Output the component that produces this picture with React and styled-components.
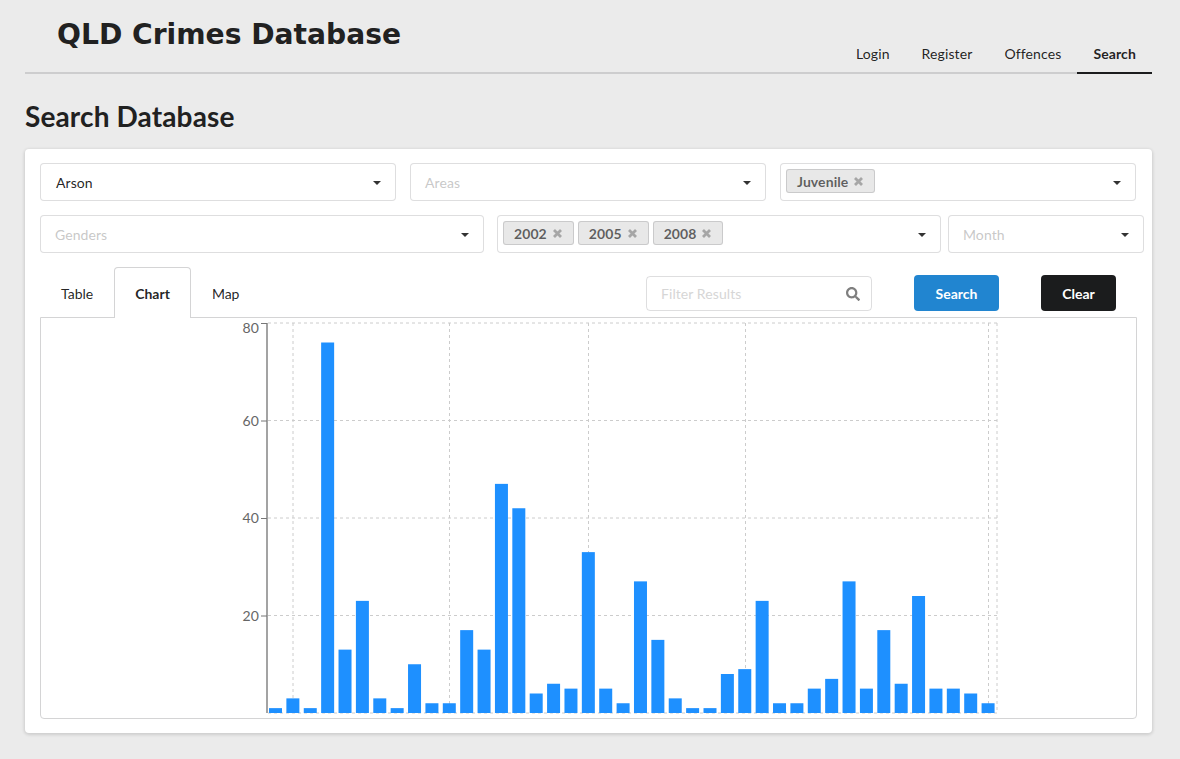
import React from 'react';
import styled, { createGlobalStyle } from 'styled-components';
import { FaSearch } from 'react-icons/fa';

const Global = createGlobalStyle`
  html, body {
    margin: 0;
    padding: 0;
    background: #ebebeb;
    font-family: Lato, "Helvetica Neue", Arial, sans-serif;
    font-size: 14px;
    letter-spacing: 0.08px;
    color: rgba(0, 0, 0, 0.87);
  }
  * { box-sizing: border-box; }
`;

const COUNTS = [1, 3, 1, 76, 13, 23, 3, 1, 10, 2, 2, 17, 13, 47, 42, 4, 6, 5, 33, 5, 2, 27, 15, 3, 1, 1, 8, 9, 23, 2, 2, 5, 7, 27, 5, 17, 6, 24, 5, 5, 4, 2];

const Cross = () => (
  <CrossIcon viewBox="0 0 11 11">
    <path d="M2 2 L9 9 M9 2 L2 9" />
  </CrossIcon>
);

const App = () => (
  <Page>
    <Global />
    <Header>
      <Title>QLD Crimes Database</Title>
      <Nav>
        <NavItem>Login</NavItem>
        <NavItem>Register</NavItem>
        <NavItem>Offences</NavItem>
        <NavItem $active>Search</NavItem>
      </Nav>
    </Header>
    <Heading>Search Database</Heading>
    <Card>
      <Row>
        <Select $width={356}><Value>Arson</Value><Caret /></Select>
        <Select $width={356}><Placeholder>Areas</Placeholder><Caret /></Select>
        <Select $width={356} $chips><Chip>Juvenile<Cross /></Chip><Caret /></Select>
      </Row>
      <Row $gap={13}>
        <Select $width={444}><Placeholder>Genders</Placeholder><Caret /></Select>
        <Select $width={444} $chips>
          <Chip>2002<Cross /></Chip>
          <Chip>2005<Cross /></Chip>
          <Chip>2008<Cross /></Chip>
          <Caret />
        </Select>
        <Select $width={196} $narrowGap><Placeholder>Month</Placeholder><Caret /></Select>
      </Row>
      <TabBar>
        <Tab>Table</Tab>
        <Tab $active>Chart</Tab>
        <Tab>Map</Tab>
        <Filter>
          <FilterText>Filter Results</FilterText>
          <FaSearch />
        </Filter>
        <Button $bg="#2185d0" $width={85}>Search</Button>
        <Button $bg="#1b1c1d" $width={75}>Clear</Button>
      </TabBar>
      <ChartBox>
        <BarChart />
      </ChartBox>
    </Card>
  </Page>
);

const BarChart = () => {
  const yOf = (v) => 395 - v * 4.875;
  const gridX = [252, 408.5, 547.5, 704.5, 947.5, 956];
  return (
    <ChartSvg viewBox="0 0 1095 400">
      {[0, 20, 40, 60, 80].map((v) => (
        <line key={v} x1="227" x2="956" y1={yOf(v)} y2={yOf(v)} stroke="#ccc" strokeDasharray="3 3" />
      ))}
      {gridX.map((x) => (
        <line key={x} x1={x} x2={x} y1="5" y2="395" stroke="#ccc" strokeDasharray="3 3" />
      ))}
      {COUNTS.map((v, i) => (
        <rect key={i} x={228 + i * 17.38} y={yOf(v)} width="13" height={v * 4.875} fill="#1e90ff" />
      ))}
      <line x1="226" x2="226" y1="5" y2="395" stroke="#a3a3a3" strokeWidth="2" />
      {[20, 40, 60, 80].map((v) => (
        <g key={v}>
          <line x1="220" x2="226" y1={yOf(v) + 0.5} y2={yOf(v) + 0.5} stroke="#777" />
          <AxisLabel x="218" y={yOf(v) + (v === 80 ? 10 : 5)} textAnchor="end">{v}</AxisLabel>
        </g>
      ))}
    </ChartSvg>
  );
};

export default App;

const Page = styled.div`
  width: 1127px;
  height: 759px;
  margin-left: 25px;
`;

const Header = styled.div`
  display: flex;
  justify-content: space-between;
  height: 74px;
  border-bottom: 2px solid rgba(34, 36, 38, 0.15);
`;

const Title = styled.h1`
  margin: 0;
  padding: 16px 0 0 32px;
  font-family: "DejaVu Sans", sans-serif;
  font-size: 28.16px;
  line-height: 38px;
  font-weight: 700;
  letter-spacing: 0;
  color: #212121;
`;

const Nav = styled.div`
  display: flex;
  align-self: flex-end;
  margin-bottom: -2px;
`;

const NavItem = styled.a`
  padding: 0 16px;
  height: 39px;
  line-height: 38px;
  letter-spacing: 0.12px;
  font-weight: ${(p) => (p.$active ? 700 : 400)};
  border-bottom: 2px solid ${(p) => (p.$active ? '#1b1c1d' : 'transparent')};
`;

const Heading = styled.h2`
  margin: 0;
  padding-top: 24px;
  height: 75px;
  font-size: 28px;
  line-height: 36px;
  font-weight: 700;
  letter-spacing: 0.13px;
  color: #212121;
`;

const Card = styled.div`
  height: 584px;
  padding: 14px 15px;
  background: #fff;
  border-radius: 4px;
  box-shadow: 0 1px 3px 1px rgba(34, 36, 38, 0.14);
`;

const Row = styled.div`
  display: flex;
  margin-bottom: 14px;
  gap: ${(p) => p.$gap || 14}px;
`;

const Select = styled.div`
  position: relative;
  display: flex;
  flex: 0 0 ${(p) => p.$width}px;
  align-items: center;
  gap: 4px;
  height: 38px;
  padding: ${(p) => (p.$chips ? '0 0 2px 5px' : '0 0 0 14px')};
  margin-left: ${(p) => (p.$narrowGap ? '-6px' : '0')};
  background: #fff;
  border: 1px solid rgba(34, 36, 38, 0.15);
  border-radius: 4px;
`;

const Value = styled.span`
  padding-left: 1px;
`;

const Placeholder = styled.span`
  color: rgba(191, 191, 191, 0.87);
`;

const FilterText = styled.span`
  color: #d6d6d6;
`;

const Caret = styled.i`
  position: absolute;
  top: 17px;
  right: 14px;
  width: 0;
  height: 0;
  border-left: 4px solid transparent;
  border-right: 4px solid transparent;
  border-top: 4px solid #333;
`;

const Chip = styled.span`
  display: inline-flex;
  align-items: center;
  height: 24px;
  padding: 0 10px 0 10px;
  gap: 5px;
  font-weight: 700;
  color: rgba(0, 0, 0, 0.6);
  background: #e8e8e8;
  border: 1px solid rgba(34, 36, 38, 0.15);
  border-radius: 3px;
`;

const CrossIcon = styled.svg`
  width: 11px;
  height: 11px;
  path {
    fill: none;
    stroke: #a6a6a6;
    stroke-width: 2.8;
  }
`;

const TabBar = styled.div`
  display: flex;
  align-items: center;
  height: 50px;
`;

const Tab = styled.a`
  align-self: stretch;
  height: ${(p) => (p.$active ? '51px' : '50px')};
  padding: 0 20px;
  line-height: 51px;
  letter-spacing: 0;
  font-weight: ${(p) => (p.$active ? 700 : 400)};
  border: 1px solid ${(p) => (p.$active ? '#d4d4d5' : 'transparent')};
  border-bottom: none;
  border-radius: 4px 4px 0 0;
  background: ${(p) => (p.$active ? '#fff' : 'transparent')};
  position: relative;
  z-index: 1;
`;

const Filter = styled.div`
  display: flex;
  align-items: center;
  justify-content: space-between;
  width: 226px;
  height: 35px;
  margin: 3px 0 0 auto;
  padding: 0 11px 0 14px;
  border: 1px solid rgba(34, 36, 38, 0.15);
  border-radius: 4px;
  svg {
    width: 14px;
    height: 14px;
    color: #7f7f7f;
  }
`;

const Button = styled.button`
  width: ${(p) => p.$width}px;
  height: 36px;
  margin: 2px 0 0 42px;
  padding: 0;
  border: none;
  border-radius: 4px;
  font-family: inherit;
  font-size: 14px;
  font-weight: 700;
  letter-spacing: 0;
  color: #fff;
  background: ${(p) => p.$bg};
  &:last-child {
    margin-right: 21px;
  }
`;

const ChartBox = styled.div`
  width: 1097px;
  height: 402px;
  border: 1px solid #d4d4d5;
  border-radius: 0 0 4px 4px;
`;

const ChartSvg = styled.svg`
  display: block;
  width: 1095px;
  height: 400px;
`;

const AxisLabel = styled.text`
  font-family: Lato, sans-serif;
  font-size: 14px;
  fill: #666;
`;
